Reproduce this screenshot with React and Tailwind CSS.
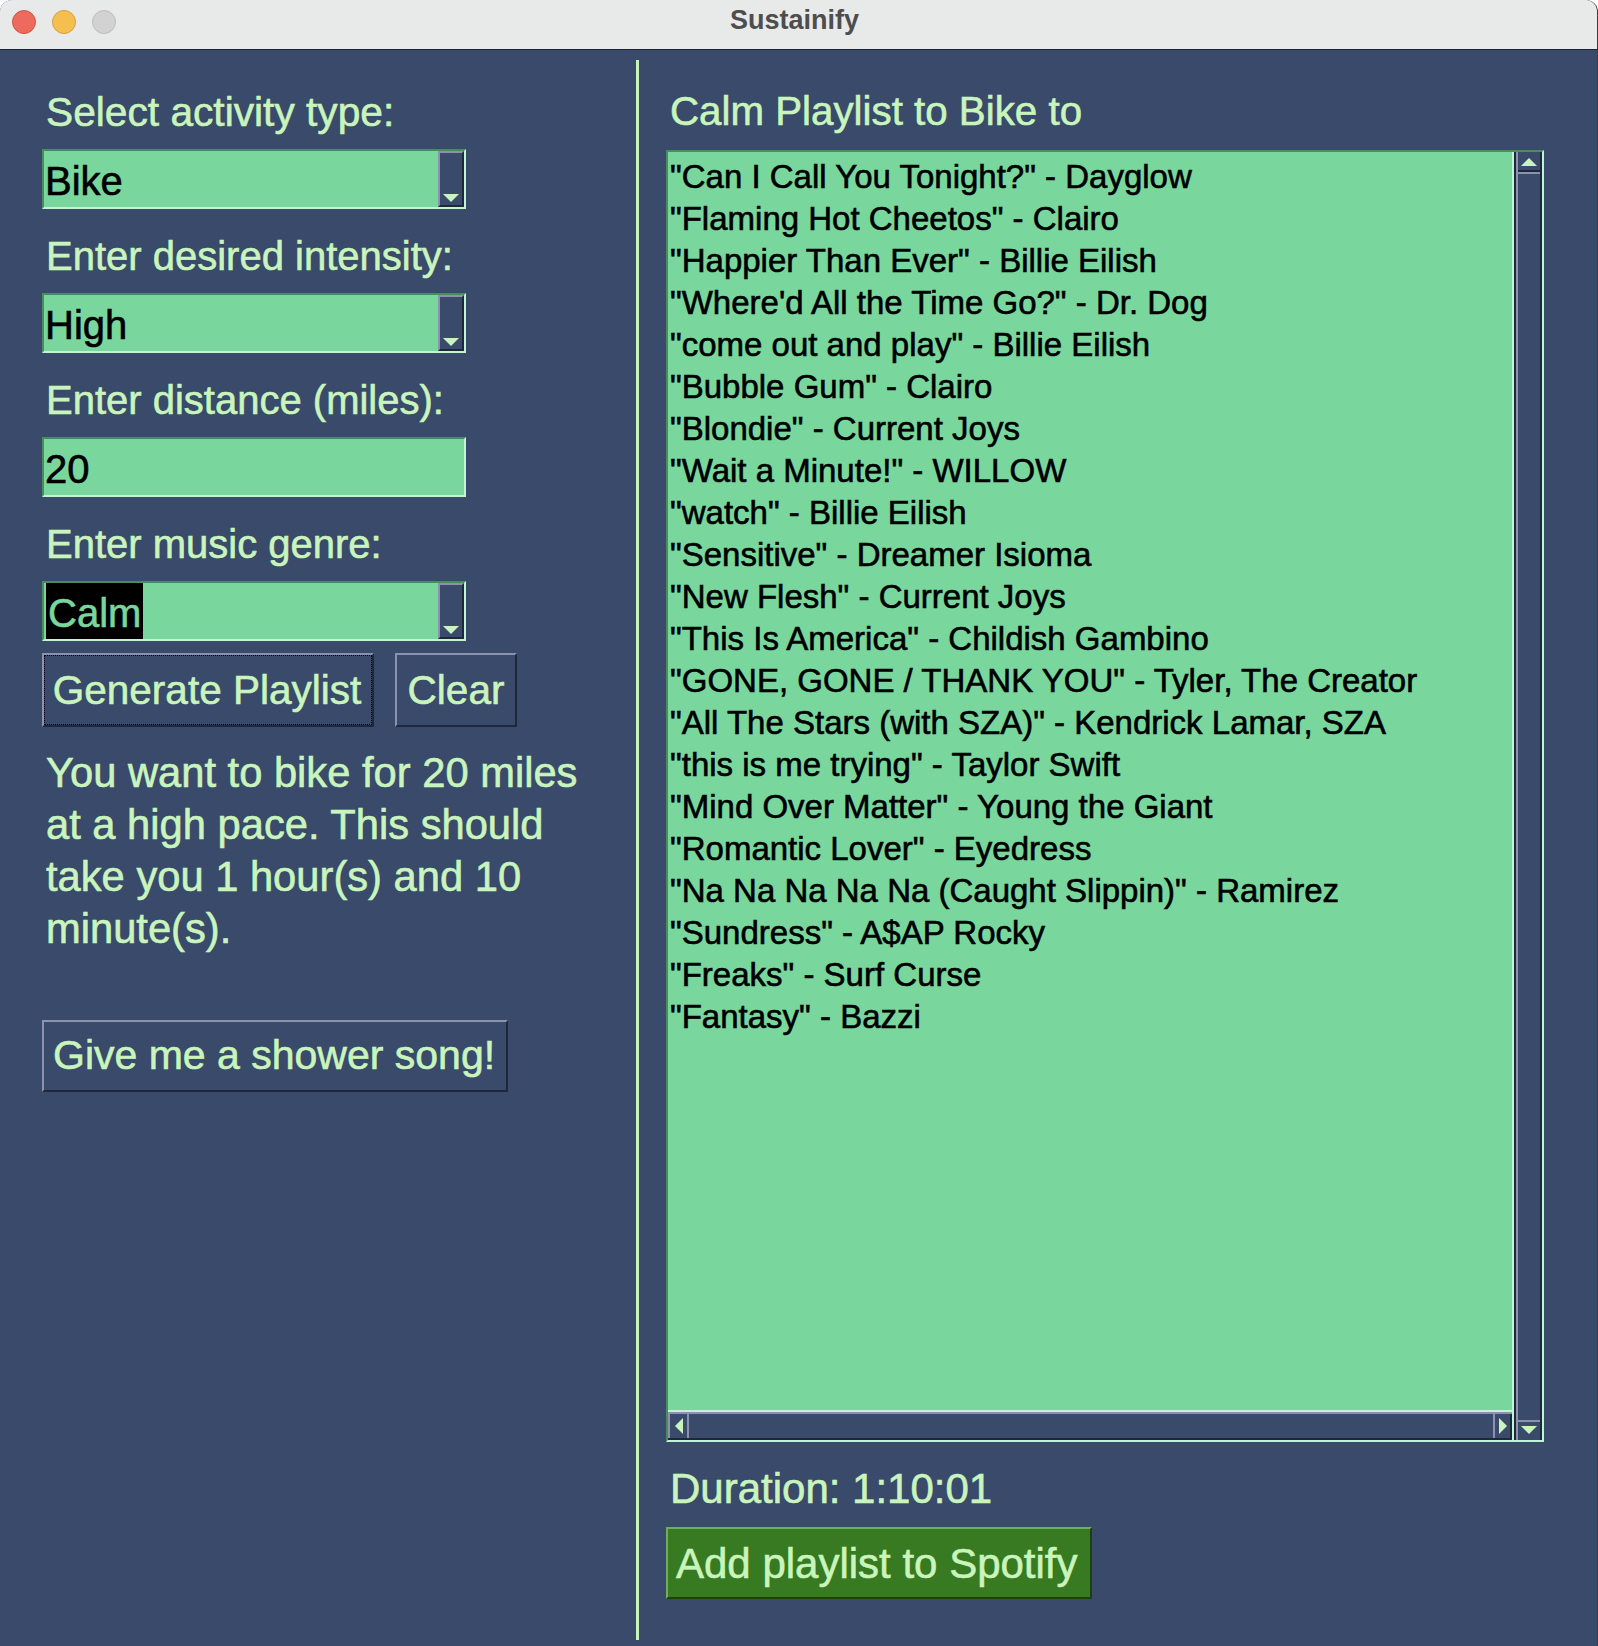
import React from "react";

const songs = [
  '"Can I Call You Tonight?" - Dayglow',
  '"Flaming Hot Cheetos" - Clairo',
  '"Happier Than Ever" - Billie Eilish',
  "\"Where'd All the Time Go?\" - Dr. Dog",
  '"come out and play" - Billie Eilish',
  '"Bubble Gum" - Clairo',
  '"Blondie" - Current Joys',
  '"Wait a Minute!" - WILLOW',
  '"watch" - Billie Eilish',
  '"Sensitive" - Dreamer Isioma',
  '"New Flesh" - Current Joys',
  '"This Is America" - Childish Gambino',
  '"GONE, GONE / THANK YOU" - Tyler, The Creator',
  '"All The Stars (with SZA)" - Kendrick Lamar, SZA',
  '"this is me trying" - Taylor Swift',
  '"Mind Over Matter" - Young the Giant',
  '"Romantic Lover" - Eyedress',
  '"Na Na Na Na Na (Caught Slippin)" - Ramirez',
  '"Sundress" - A$AP Rocky',
  '"Freaks" - Surf Curse',
  '"Fantasy" - Bazzi',
];

function Label({ children, className = "" }) {
  return (
    <div className={"h-[48px] leading-[48px] text-[#c9f5bd] whitespace-nowrap " + className}>
      {children}
    </div>
  );
}

function DownTri() {
  return (
    <svg width="16" height="8" viewBox="0 0 16 8">
      <polygon points="0,0 16,0 8,8" fill="#c9f5bd" />
    </svg>
  );
}

function Combo({ value, selected }) {
  return (
    <div className="mt-[13px] w-[424px] h-[60px] flex border-2 border-t-[#4a8c5e] border-l-[#4a8c5e] border-r-[#bff5d5] border-b-[#bff5d5] bg-[#79d69c]">
      <div className="flex-1 pl-[1px] text-[40px] leading-[60px] text-black overflow-hidden">
        {selected ? (
          <span className="inline-block h-[56px] leading-[60px] bg-black text-[#79d69c] px-[2px] ml-[1px] overflow-hidden align-top">
            {value}
          </span>
        ) : (
          value
        )}
      </div>
      <div className="w-[26px] h-full bg-[#3a4a6b] border-2 border-t-[#8c92ad] border-l-[#8c92ad] border-r-[#1f273a] border-b-[#1f273a] flex items-end justify-center pb-[3px]">
        <DownTri />
      </div>
    </div>
  );
}

const raised =
  "border-2 border-t-[#8c92ad] border-l-[#8c92ad] border-r-[#1f273a] border-b-[#1f273a] bg-[#3a4a6b] text-[#c9f5bd] whitespace-nowrap";

export default function App() {
  return (
    <div className="w-[1598px] h-[1646px] bg-white">
      <div className="w-[1598px] h-[1646px] flex flex-col overflow-hidden rounded-t-[12px] bg-[#3a4a6b] border-r border-[#3c3c3c] font-['Liberation_Sans',Arial,sans-serif] [-webkit-text-stroke:0.6px]">
        {/* Title bar */}
        <div className="h-[50px] shrink-0 bg-[#e8e9e9] border-b border-[#1b2336] grid grid-cols-[1fr_auto_1fr] items-center [-webkit-text-stroke:0px]">
          <div className="flex items-center gap-[16px] pl-[12px] mb-[5px]">
            <span className="w-[24px] h-[24px] rounded-full bg-[#ec6a5e] border border-[#d25446]" />
            <span className="w-[24px] h-[24px] rounded-full bg-[#f4bf4f] border border-[#d6a13b]" />
            <span className="w-[24px] h-[24px] rounded-full bg-[#d2d2d2] border border-[#bdbdbd]" />
          </div>
          <div className="text-[27px] font-bold text-[#4d4d4d] leading-none mb-[8px] mr-[8px]">
            Sustainify
          </div>
          <div />
        </div>

        {/* Main */}
        <div className="flex-1 flex min-h-0">
          {/* Left column */}
          <div className="w-[636px] shrink-0 flex flex-col pl-[42px] pt-[38px]">
            <Label className="pl-[4px] text-[40.7px]">Select activity type:</Label>
            <Combo value="Bike" />
            <Label className="pl-[4px] mt-[23px] text-[40px]">Enter desired intensity:</Label>
            <Combo value="High" />
            <Label className="pl-[4px] mt-[23px] text-[40px]">Enter distance (miles):</Label>
            <div className="mt-[13px] w-[424px] h-[60px] border-2 border-t-[#4a8c5e] border-l-[#4a8c5e] border-r-[#bff5d5] border-b-[#bff5d5] bg-[#79d69c] pl-[1px] text-[40px] leading-[60px] text-black">
              20
            </div>
            <Label className="pl-[4px] mt-[23px] text-[40px]">Enter music genre:</Label>
            <Combo value="Calm" selected />
            <div className="mt-[12px] flex gap-[21px] text-[40.5px]">
              <div className={"w-[332px] h-[74px] " + raised}>
                <div className="w-full h-full border border-dotted border-black flex items-center justify-center pr-[2px]">
                  Generate Playlist
                </div>
              </div>
              <div className={"w-[122px] h-[74px] flex items-center justify-center " + raised}>Clear</div>
            </div>
            <div className="mt-[20px] pl-[4px] text-[41.7px] leading-[52px] text-[#c9f5bd] whitespace-nowrap">
              <div>You want to bike for 20 miles</div>
              <div>at a high pace. This should</div>
              <div>take you 1 hour(s) and 10</div>
              <div>minute(s).</div>
            </div>
            <div className={"mt-[65px] w-[466px] h-[72px] flex items-center pl-[9px] text-[41px] " + raised}>
              Give me a shower song!
            </div>
          </div>

          {/* Separator */}
          <div className="w-[3px] shrink-0 bg-[#c6f5b9] mt-[10px] mb-[6px]" />

          {/* Right column */}
          <div className="flex-1 flex flex-col pl-[27px] pt-[38px]">
            <Label className="pl-[4px] text-[40.3px]">Calm Playlist to Bike to</Label>
            <div className="mt-[14px] w-[878px] h-[1292px] flex border-2 border-t-[#4a8c5e] border-l-[#4a8c5e] border-r-[#bff5d5] border-b-[#bff5d5]">
              <div className="flex-1 flex flex-col border-r-2 border-r-[#bff5d5]">
                <div className="flex-1 bg-[#79d69c] border-b-2 border-b-[#bff5d5] pt-[4px] pl-[2px] text-[33px] leading-[42px] text-black whitespace-nowrap overflow-hidden">
                  {songs.map((s) => (
                    <div key={s}>{s}</div>
                  ))}
                </div>
                <div className="h-[28px] flex border-t-2 border-t-[#8c92ad] border-b-2 border-b-[#1f273a]">
                  <div className="w-[21px] border-l-2 border-l-[#8c92ad] border-r-2 border-r-[#8c92ad] flex items-center justify-center">
                    <svg width="8" height="16" viewBox="0 0 8 16">
                      <polygon points="8,0 8,16 0,8" fill="#c9f5bd" />
                    </svg>
                  </div>
                  <div className="flex-1" />
                  <div className="w-[19px] border-l-2 border-l-[#8c92ad] border-r-2 border-r-[#1f273a] flex items-center justify-center">
                    <svg width="8" height="16" viewBox="0 0 8 16">
                      <polygon points="0,0 8,8 0,16" fill="#c9f5bd" />
                    </svg>
                  </div>
                </div>
              </div>
              <div className="w-[28px] flex flex-col border-l-2 border-l-[#1f273a]">
                <div className="flex-1 flex flex-col border-l-2 border-l-[#8c92ad] border-r-2 border-r-[#1f273a]">
                  <div className="h-[20px] border-b-2 border-b-[#1f273a] flex justify-center pt-[6px]">
                    <svg width="16" height="8" viewBox="0 0 16 8">
                      <polygon points="8,0 16,8 0,8" fill="#c9f5bd" />
                    </svg>
                  </div>
                  <div className="h-[2px] bg-[#8c92ad]" />
                  <div className="flex-1" />
                  <div className="h-[20px] border-t-2 border-t-[#8c92ad] flex justify-center pt-[4px]">
                    <DownTri />
                  </div>
                </div>
              </div>
            </div>
            <Label className="mt-[23px] pl-[4px] text-[42px]">Duration: 1:10:01</Label>
            <div className="mt-[14px] w-[426px] h-[72px] flex items-center pl-[8px] bg-[#377a22] border-2 border-t-[#6fae5a] border-l-[#6fae5a] border-r-[#1d3f12] border-b-[#1d3f12] text-[42px] text-[#c9f5bd] whitespace-nowrap">
              Add playlist to Spotify
            </div>
          </div>
        </div>
      </div>
    </div>
  );
}
